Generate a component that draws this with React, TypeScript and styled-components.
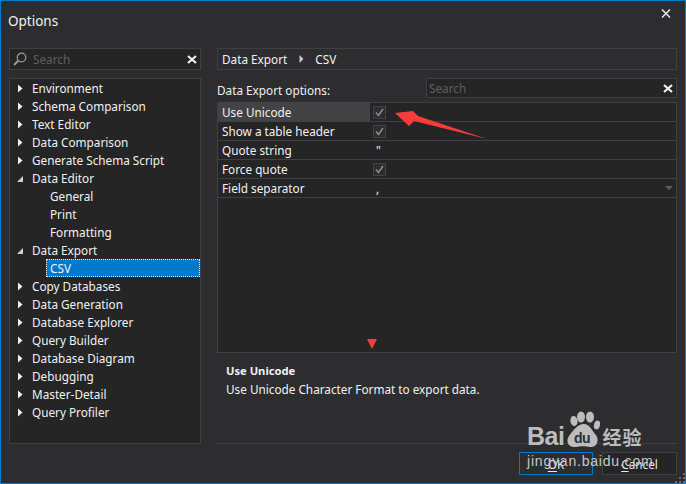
import * as React from 'react';
import styled, { createGlobalStyle } from 'styled-components';

const GlobalStyle = createGlobalStyle`
  html, body { margin: 0; padding: 0; background: #2d2d30; }
  body { font-family: "Noto Sans", "Open Sans", sans-serif; font-size: 11.75px; color: #f1f1f1; }
`

const Window = styled.div`
  position: relative;
  box-sizing: border-box;
  width: 686px;
  height: 484px;
  border: 1px solid #007acc;
  background: #2d2d30;
  overflow: hidden;
  display: flex;
  flex-direction: column;
`

const TitleBar = styled.div`
  height: 47px;
  flex: none;
  padding: 9px 0 0 7px;
  box-sizing: border-box;
  font-size: 13.5px;
  line-height: 22px;
  color: #f1f1f1;
`

const CloseButton = styled.svg`
  position: absolute;
  top: 8px;
  right: 14px;
`

const Body = styled.div`
  flex: 1;
  display: flex;
  gap: 16px;
  padding: 0 8px 0 8px;
`

const Sidebar = styled.div`
  width: 192px;
  flex: none;
  display: flex;
  flex-direction: column;
  gap: 8px;
`

const Field = styled.div<{ $height: number }>`
  box-sizing: border-box;
  height: ${p => p.$height}px;
  flex: none;
  display: flex;
  align-items: center;
  background: #252526;
  border: 1px solid #3f3f46;
`

const SearchText = styled.span<{ $left: number }>`
  flex: 1;
  padding-left: ${p => p.$left}px;
  color: #5f5f62;
`

const Tree = styled.div`
  box-sizing: border-box;
  height: 366px;
  flex: none;
  background: #252526;
  border: 1px solid #3f3f46;
`

const TreeRow = styled.div<{ $child?: boolean; $selected?: boolean }>`
  height: 18px;
  line-height: 18px;
  display: flex;
  align-items: center;
  margin-left: ${p => (p.$child ? 36 : 0)}px;
  padding-left: ${p => (p.$child ? 4 : 0)}px;
  color: #f1f1f1;
  background: ${p => (p.$selected ? '#007acc' : 'transparent')};
  outline: ${p => (p.$selected ? '1px dotted #e8e8e8' : 'none')};
  outline-offset: -1px;
  white-space: nowrap;
`

const Arrow = styled.svg`
  flex: none;
  margin: 0 8px 0 6px;
`

const Content = styled.div`
  width: 460px;
  flex: none;
  display: flex;
  flex-direction: column;
`

const Breadcrumb = styled(Field)`
  background: #2d2d30;
  padding-left: 4px;
  gap: 11.5px;
`

const OptionsHead = styled.div`
  height: 28px;
  flex: none;
  display: flex;
  align-items: flex-end;
  justify-content: space-between;
  margin-bottom: 4px;
`

const OptionsLabel = styled.span`
  line-height: 18px;
  margin-bottom: -1px;
`

const GridSearch = styled(Field)`
  width: 251px;
`

const Grid = styled.div`
  box-sizing: border-box;
  height: 251px;
  flex: none;
  background: #252526;
  border: 1px solid #3f3f46;
`

const GridRow = styled.div`
  box-sizing: border-box;
  height: 19px;
  display: flex;
  border-bottom: 1px solid #3f3f46;
  background: #252526;
`

const GridName = styled.div<{ $active?: boolean }>`
  width: 152px;
  flex: none;
  padding-left: 4px;
  box-sizing: border-box;
  line-height: 18px;
  margin-top: ${p => (p.$active ? -1 : 0)}px;
  padding-top: ${p => (p.$active ? 1 : 0)}px;
  background: ${p => (p.$active ? '#434346' : 'transparent')};
`

const GridValue = styled.div`
  flex: 1;
  display: flex;
  align-items: center;
  padding-left: 3px;
  line-height: 18px;
  position: relative;
`

const Checkbox = styled.svg`
  display: block;
`

const DropArrow = styled.svg`
  position: absolute;
  right: 3px;
  top: 7px;
`

const Description = styled.div`
  height: 91px;
  flex: none;
  box-sizing: border-box;
  padding: 9px 0 0 9px;
  border-bottom: 1px solid #3f3f46;
  line-height: 18px;
`

const DescriptionTitle = styled.div`
  font-weight: 700;
  font-size: 11.2px;
`

const Footer = styled.div`
  display: flex;
  justify-content: flex-end;
  gap: 9px;
  padding-top: 8px;
`

const Button = styled.div<{ $primary?: boolean }>`
  box-sizing: border-box;
  width: ${p => (p.$primary ? 74 : 75)}px;
  height: 23px;
  display: flex;
  align-items: center;
  justify-content: center;
  background: ${p => (p.$primary ? '#2d2d30' : '#252526')};
  border: 1px solid ${p => (p.$primary ? '#007acc' : '#3f3f46')};
  color: #e8e8e8;
  u { text-underline-offset: 2px; }
`

const RedPointer = styled.svg`
  position: absolute;
  left: 366px;
  top: 338px;
`

const RedArrow = styled.svg`
  position: absolute;
  left: 389px;
  top: 104px;
`

const Grip = styled.svg`
  position: absolute;
  right: 0;
  bottom: 0;
`

const Watermark = styled.div`
  position: absolute;
  left: 526px;
  top: 410px;
  width: 160px;
  color: #bdbdbd;
  pointer-events: none;
`

const LogoLine = styled.div`
  display: flex;
  align-items: flex-end;
  height: 38px;
  font-family: "Liberation Sans", sans-serif;
  font-weight: 700;
  font-size: 25px;
  line-height: 26px;
  letter-spacing: -0.5px;
`

const LogoCn = styled.span`
  font-family: "Noto Sans CJK SC", sans-serif;
  font-size: 19px;
  line-height: 24px;
  letter-spacing: 1px;
  margin-left: 2px;
`

const LogoPaw = styled.svg`
  margin: 0 0 1px 0;
  flex: none;
`

const SiteLine = styled.div`
  font-family: "Liberation Sans", sans-serif;
  font-size: 14px;
  letter-spacing: 0.8px;
  line-height: 16px;
  margin-top: 4px;
  white-space: nowrap;
  color: #c8c8c8;
`

const ClearIcon = () => (
  <svg width="10" height="9" viewBox="0 0 10 9" style={{ marginRight: 3 }}>
    <path d="M1 1 L9 8 M9 1 L1 8" stroke="#f1f1f1" strokeWidth="2.2" />
  </svg>
)

const MagnifierIcon = () => (
  <svg width="16" height="16" viewBox="0 0 16 16" style={{ marginLeft: 2, flex: 'none' }}>
    <circle cx="9.5" cy="6.5" r="4.3" fill="none" stroke="#9a9a9a" strokeWidth="1.2" />
    <path d="M6.3 9.7 L2 14" stroke="#9a9a9a" strokeWidth="2" />
  </svg>
)

const Expander = ({ open }: { open?: boolean }) => (
  <Arrow width="8" height="9" viewBox="0 0 8 9">
    {open ? <path d="M1 8 H7 V2 Z" fill="#d0d0d0" /> : <path d="M2 0.5 L6.5 4.5 L2 8.5 Z" fill="#f1f1f1" />}
  </Arrow>
)

const Check = () => (
  <Checkbox width="13" height="13" viewBox="0 0 13 13">
    <rect x="0.5" y="0.5" width="12" height="12" fill="#2d2d30" stroke="#434346" />
    <path d="M3 6.5 L5.5 9.5 L10 3" fill="none" stroke="#8a8a8a" strokeWidth="1.6" />
  </Checkbox>
)

const beforeItems = ['Environment', 'Schema Comparison', 'Text Editor', 'Data Comparison', 'Generate Schema Script']
const afterItems = ['Copy Databases', 'Data Generation', 'Database Explorer', 'Query Builder', 'Database Diagram', 'Debugging', 'Master-Detail', 'Query Profiler']

export default function App() {
  return (
    <Window>
      <GlobalStyle />
      <TitleBar>Options</TitleBar>
      <CloseButton width="10" height="9" viewBox="0 0 10 9">
        <path d="M1 0.5 L9 8.5 M9 0.5 L1 8.5" stroke="#e8e8e8" strokeWidth="1.5" />
      </CloseButton>
      <Body>
        <Sidebar>
          <Field $height={22}>
            <MagnifierIcon />
            <SearchText $left={5}>Search</SearchText>
            <ClearIcon />
          </Field>
          <Tree>
            {beforeItems.map(item => (
              <TreeRow key={item}><Expander />{item}</TreeRow>
            ))}
            <TreeRow><Expander open />Data Editor</TreeRow>
            <TreeRow $child>General</TreeRow>
            <TreeRow $child>Print</TreeRow>
            <TreeRow $child>Formatting</TreeRow>
            <TreeRow><Expander open />Data Export</TreeRow>
            <TreeRow $child $selected>CSV</TreeRow>
            {afterItems.map(item => (
              <TreeRow key={item}><Expander />{item}</TreeRow>
            ))}
          </Tree>
        </Sidebar>
        <Content>
          <Breadcrumb $height={22}>
            <span>Data Export</span>
            <svg width="5" height="8" viewBox="0 0 5 8"><path d="M0.5 0 L4.5 4 L0.5 8 Z" fill="#c8c8c8" /></svg>
            <span>CSV</span>
          </Breadcrumb>
          <OptionsHead>
            <OptionsLabel>Data Export options:</OptionsLabel>
            <GridSearch $height={20}>
              <SearchText $left={2}>Search</SearchText>
              <ClearIcon />
            </GridSearch>
          </OptionsHead>
          <Grid>
            <GridRow>
              <GridName $active>Use Unicode</GridName>
              <GridValue><Check /></GridValue>
            </GridRow>
            <GridRow>
              <GridName>Show a table header</GridName>
              <GridValue><Check /></GridValue>
            </GridRow>
            <GridRow>
              <GridName>Quote string</GridName>
              <GridValue>&nbsp;"</GridValue>
            </GridRow>
            <GridRow>
              <GridName>Force quote</GridName>
              <GridValue><Check /></GridValue>
            </GridRow>
            <GridRow>
              <GridName>Field separator</GridName>
              <GridValue>
                &nbsp;,
                <DropArrow width="8" height="4" viewBox="0 0 8 4"><path d="M0 0 H8 L4 4 Z" fill="#5f5f62" /></DropArrow>
              </GridValue>
            </GridRow>
          </Grid>
          <Description>
            <DescriptionTitle>Use Unicode</DescriptionTitle>
            <div>Use Unicode Character Format to export data.</div>
          </Description>
          <Footer>
            <Button $primary><span><u>O</u>K</span></Button>
            <Button><span><u>C</u>ancel</span></Button>
          </Footer>
        </Content>
      </Body>
      <RedArrow width="100" height="36" viewBox="0 0 100 36">
        <path d="M5 8 L23 6 L28 11 L97 34 L24 16 L19 21 Z" fill="#f63c3a" />
      </RedArrow>
      <RedPointer width="10" height="10" viewBox="0 0 10 10">
        <path d="M0 0 H10 L5 10 Z" fill="#f63c3a" />
      </RedPointer>
      <Watermark>
        <LogoLine>
          Bai
          <LogoPaw width="36" height="37" viewBox="0 0 36 37">
            <ellipse cx="10" cy="10" rx="3.6" ry="5" transform="rotate(-10 10 10)" fill="#bdbdbd" />
            <ellipse cx="17" cy="6" rx="4" ry="5.5" fill="#bdbdbd" />
            <ellipse cx="26" cy="6" rx="4" ry="5.5" fill="#bdbdbd" />
            <ellipse cx="33" cy="14" rx="3" ry="4.5" transform="rotate(15 33 14)" fill="#bdbdbd" />
            <path d="M20 13 C26 13 28 20 32 24 C36 30 32 37 26 36 C22 35 16 35 12 36 C5 37 1 31 5 25 C9 20 13 13 20 13 Z" fill="#bdbdbd" />
            <text x="18" y="32" textAnchor="middle" fontSize="14" fontWeight="700" fontFamily="Liberation Sans" fill="#2d2d30">du</text>
          </LogoPaw>
          <LogoCn>经验</LogoCn>
        </LogoLine>
        <SiteLine>jingyan.baidu.com</SiteLine>
      </Watermark>
      <Grip width="10" height="10" viewBox="0 0 10 10">
        <path d="M8 0 h2 v2 h-2 Z M4 4 h2 v2 h-2 Z M8 4 h2 v2 h-2 Z M0 8 h2 v2 h-2 Z M4 8 h2 v2 h-2 Z M8 8 h2 v2 h-2 Z" fill="#6a6a6a" />
      </Grip>
    </Window>
  );
}
